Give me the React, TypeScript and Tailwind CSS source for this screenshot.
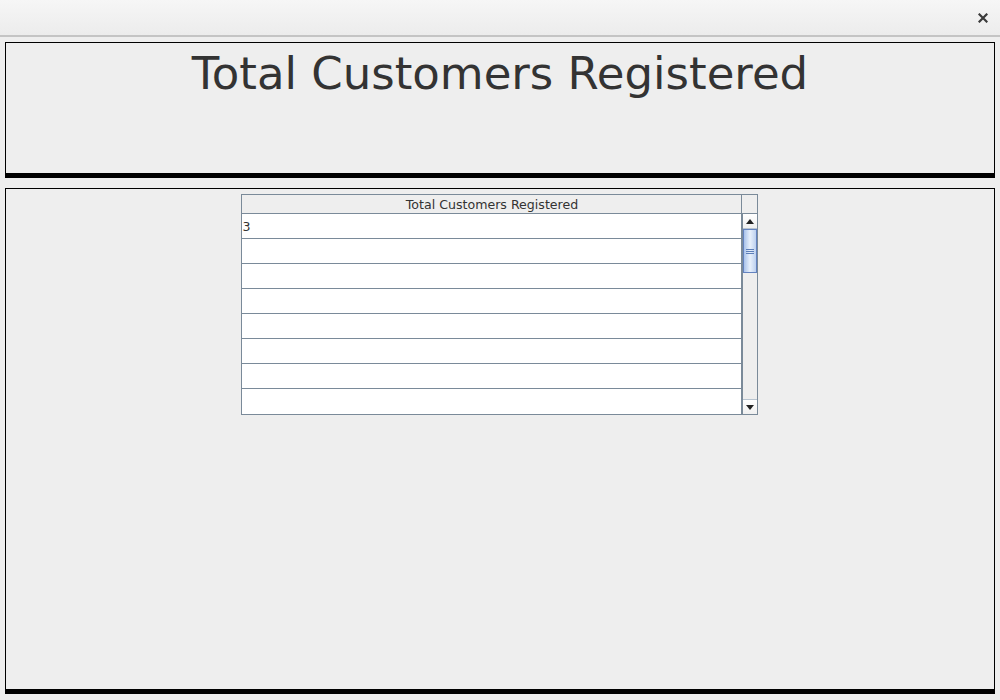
import React from "react";

const rows = ["3", "", "", "", "", "", "", ""];

export default function App() {
  return (
    <div className="w-[1000px] h-[700px] bg-[#eeeeee] overflow-hidden flex flex-col" style={{ fontFamily: '"DejaVu Sans", sans-serif' }}>
      {/* title bar */}
      <div className="h-[37px] shrink-0 bg-gradient-to-b from-[#f6f6f6] to-[#ececec] border-b-2 border-[#c4c4c4] flex items-center justify-end pr-[12px]">
        <svg width="10" height="10" viewBox="0 0 10 10">
          <path d="M1.5 1.5 L8.5 8.5 M8.5 1.5 L1.5 8.5" stroke="#3a3a3a" strokeWidth="2.2" strokeLinecap="square" />
        </svg>
      </div>
      {/* header panel */}
      <div className="mx-[5px] mt-[5px] h-[136px] w-[990px] border-l border-r border-t border-black border-b-[5px] flex justify-center">
        <div className="text-[45px] leading-none text-[#333333] mt-[8px]">Total Customers Registered</div>
      </div>
      {/* content panel */}
      <div className="mx-[5px] mt-[10px] h-[506px] w-[990px] border-l border-r border-t border-black border-b-[5px] flex justify-center">
        <div className="mt-[5px] ml-[-2px] w-[517px] h-[221px] border border-[#7a8a99] border-b-2 flex flex-col bg-[#eeeeee]">
          {/* header */}
          <div className="h-[19px] flex border-b border-[#7a8a99] shrink-0">
            <div className="w-[500px] border-r border-[#7a8a99] text-[12.6px] text-[#333333] flex items-center justify-center leading-none pt-[2px] pl-[2px]">
              Total Customers Registered
            </div>
            <div className="flex-1" />
          </div>
          <div className="flex flex-1">
            <div className="w-[501px] bg-white border-r-2 border-[#7a8a99] flex flex-col">
              {rows.map((r, i) => (
                <div key={i} className="h-[25px] border-b border-[#7a8a99] text-[12.6px] text-[#333333] pl-[1px] pt-[2px] flex items-center leading-none last:border-b-0">
                  {r}
                </div>
              ))}
            </div>
            {/* scrollbar */}
            <div className="flex-1 flex flex-col bg-[#eeeeee]">
              <div className="h-[15px] bg-gradient-to-b from-white to-[#f0f0f0] border-b border-[#b8c4d0] flex items-center justify-center">
                <svg width="8" height="5" viewBox="0 0 8 5"><path d="M0 5 L4 0 L8 5 Z" fill="#222" /></svg>
              </div>
              <div className="h-[44px] border border-[#6382bf] bg-gradient-to-r from-[#a8c2ea] via-[#e8f0fb] to-[#bcd0ef] flex flex-col items-center justify-center gap-[1px]">
                <div className="w-[8px] h-[1px] bg-[#5d7fb9]" />
                <div className="w-[8px] h-[1px] bg-[#5d7fb9]" />
                <div className="w-[8px] h-[1px] bg-[#5d7fb9]" />
              </div>
              <div className="flex-1" />
              <div className="h-[15px] bg-gradient-to-b from-white to-[#f0f0f0] border-t border-[#b8c4d0] flex items-center justify-center">
                <svg width="8" height="5" viewBox="0 0 8 5"><path d="M0 0 L8 0 L4 5 Z" fill="#222" /></svg>
              </div>
            </div>
          </div>
        </div>
      </div>
    </div>
  );
}
